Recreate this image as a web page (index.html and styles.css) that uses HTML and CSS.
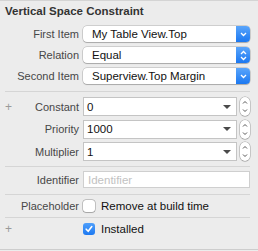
FILE: index.html
```html
<!DOCTYPE html>
<html>
<head>
<meta charset="utf-8">
<link rel="stylesheet" href="styles.css">
</head>
<body>
<div class="panel">
  <div class="title">Vertical Space Constraint</div>

  <div class="group popups">
    <div class="row">
      <div class="label"><span class="text">First Item</span></div>
      <div class="popup">
        <span class="value">My Table View.Top</span>
        <span class="cap"><svg width="7" height="5" viewBox="0 0 7 5"><path d="M1 1 L3.5 3.5 L6 1" fill="none" stroke="#fff" stroke-width="1.3"/></svg></span>
      </div>
    </div>
    <div class="row">
      <div class="label"><span class="text">Relation</span></div>
      <div class="popup">
        <span class="value">Equal</span>
        <span class="cap"><svg width="7" height="11" viewBox="0 0 7 11"><path d="M1 4 L3.5 1.5 L6 4 M1 7 L3.5 9.5 L6 7" fill="none" stroke="#fff" stroke-width="1.3"/></svg></span>
      </div>
    </div>
    <div class="row">
      <div class="label"><span class="text">Second Item</span></div>
      <div class="popup">
        <span class="value">Superview.Top Margin</span>
        <span class="cap"><svg width="7" height="5" viewBox="0 0 7 5"><path d="M1 1 L3.5 3.5 L6 1" fill="none" stroke="#fff" stroke-width="1.3"/></svg></span>
      </div>
    </div>
  </div>

  <div class="sep s1"></div>

  <div class="group combos">
    <div class="row">
      <div class="label"><span class="plus">+</span><span class="text">Constant</span></div>
      <div class="combo"><span class="value">0</span><span class="tri"></span></div>
      <div class="stepper"><svg width="10" height="19" viewBox="0 0 10 19"><path d="M3 6.5 L5 4.5 L7 6.5 M3 12.5 L5 14.5 L7 12.5" fill="none" stroke="#555" stroke-width="1"/></svg></div>
    </div>
    <div class="row">
      <div class="label"><span class="text">Priority</span></div>
      <div class="combo"><span class="value">1000</span><span class="tri"></span></div>
      <div class="stepper"><svg width="10" height="19" viewBox="0 0 10 19"><path d="M3 6.5 L5 4.5 L7 6.5 M3 12.5 L5 14.5 L7 12.5" fill="none" stroke="#555" stroke-width="1"/></svg></div>
    </div>
    <div class="row">
      <div class="label"><span class="text">Multiplier</span></div>
      <div class="combo"><span class="value">1</span><span class="tri"></span></div>
      <div class="stepper"><svg width="10" height="19" viewBox="0 0 10 19"><path d="M3 6.5 L5 4.5 L7 6.5 M3 12.5 L5 14.5 L7 12.5" fill="none" stroke="#555" stroke-width="1"/></svg></div>
    </div>
  </div>

  <div class="sep s2"></div>

  <div class="row ident">
    <div class="label"><span class="text">Identifier</span></div>
    <div class="field"><span class="placeholder">Identifier</span></div>
  </div>

  <div class="sep s3"></div>

  <div class="row check-row r1">
    <div class="label"><span class="text">Placeholder</span></div>
    <span class="box"></span>
    <span class="check-text">Remove at build time</span>
  </div>

  <div class="sep s4"></div>

  <div class="row check-row r2">
    <div class="label"><span class="plus">+</span></div>
    <span class="box on"><svg width="12" height="12" viewBox="0 0 12 12"><path d="M3.2 6.2 L5.2 8.3 L8.8 3.6" fill="none" stroke="#fff" stroke-width="1.6" stroke-linecap="round" stroke-linejoin="round"/></svg></span>
    <span class="check-text">Installed</span>
  </div>
</div>
</body>
</html>
```
FILE: styles.css
```css
html, body {
  margin: 0;
  padding: 0;
  background: #ececec;
}
body {
  width: 258px;
  height: 251px;
  overflow: hidden;
  font-family: "Liberation Sans", Arial, sans-serif;
  font-size: 11px;
  color: #1c1c1c;
}
.panel {
  box-sizing: border-box;
  width: 258px;
  height: 250px;
  border-top: 1px solid #d4d4d4;
  border-bottom: 1px solid #cdcdcd;
  display: flex;
  flex-direction: column;
}
.title {
  padding: 4px 0 0 5px;
  height: 13px;
  line-height: 13px;
  font-size: 11.5px;
  font-weight: bold;
  color: #333;
}
.group {
  display: flex;
  flex-direction: column;
}
.row {
  display: flex;
  align-items: center;
}
.label {
  width: 79px;
  flex: none;
  display: flex;
  justify-content: space-between;
  align-items: center;
  margin-right: 4px;
  color: #474747;
  white-space: nowrap;
}
.label .text {
  margin-left: auto;
}
.plus {
  margin-left: 5px;
  color: #9a9a9a;
  font-size: 12px;
  font-weight: 300;
}
.popups {
  margin-top: 8px;
  gap: 5px;
}
.popup {
  box-sizing: border-box;
  width: 167px;
  height: 16px;
  background: #fff;
  border-radius: 4px;
  box-shadow: 0 0 0 0.5px rgba(0,0,0,0.25), 0 1px 1px rgba(0,0,0,0.18);
  display: flex;
  align-items: center;
  overflow: hidden;
}
.popup .value {
  flex: 1;
  padding-left: 9px;
  font-size: 11.5px;
  color: #111;
  white-space: nowrap;
}
.popup .cap {
  width: 14px;
  height: 16px;
  background: linear-gradient(#5aa5fb, #1b78f1);
  display: flex;
  align-items: center;
  justify-content: center;
}
.sep {
  height: 1px;
  background: #d5d5d5;
  margin-left: 5px;
  width: 245px;
}
.s1 { margin-top: 7px; }
.combos {
  margin-top: 5px;
  gap: 3.5px;
}
.combo {
  box-sizing: border-box;
  width: 154px;
  height: 19px;
  background: #fff;
  border: 1px solid #c4c4c4;
  display: flex;
  align-items: center;
}
.combo .value {
  flex: 1;
  padding-left: 3px;
  font-size: 11.5px;
  color: #111;
}
.tri {
  width: 0;
  height: 0;
  border-left: 4px solid transparent;
  border-right: 4px solid transparent;
  border-top: 4px solid #4a4a4a;
  margin-right: 5px;
}
.stepper {
  box-sizing: border-box;
  width: 10px;
  height: 19px;
  margin-left: 3px;
  border-radius: 5px;
  background: #fff;
  box-shadow: 0 0 0 0.5px rgba(0,0,0,0.3), 0 0.5px 1px rgba(0,0,0,0.15);
  display: flex;
}
.s2 { margin-top: 5px; }
.ident {
  margin-top: 4px;
  height: 17px;
}
.field {
  box-sizing: border-box;
  width: 167px;
  height: 17px;
  background: #fff;
  border: 1px solid #cfcfcf;
  display: flex;
  align-items: center;
  padding-left: 4px;
}
.placeholder {
  color: #c2c2c2;
  font-size: 11.5px;
}
.s3 { margin-top: 6px; }
.check-row {
  height: 17px;
}
.r1 { margin-top: 2px; }
.s4 { margin-top: 3px; }
.r2 { margin-top: 2px; }
.box {
  box-sizing: border-box;
  width: 12px;
  height: 12px;
  border-radius: 3px;
  background: #fff;
  box-shadow: 0 0 0 0.5px rgba(0,0,0,0.35), 0 0.5px 1px rgba(0,0,0,0.15);
  flex: none;
  display: flex;
}
.box.on {
  background: linear-gradient(#4f9ffb, #1d79f1);
  box-shadow: none;
}
.check-text {
  margin-left: 6px;
  font-size: 11.5px;
  color: #111;
}
```
